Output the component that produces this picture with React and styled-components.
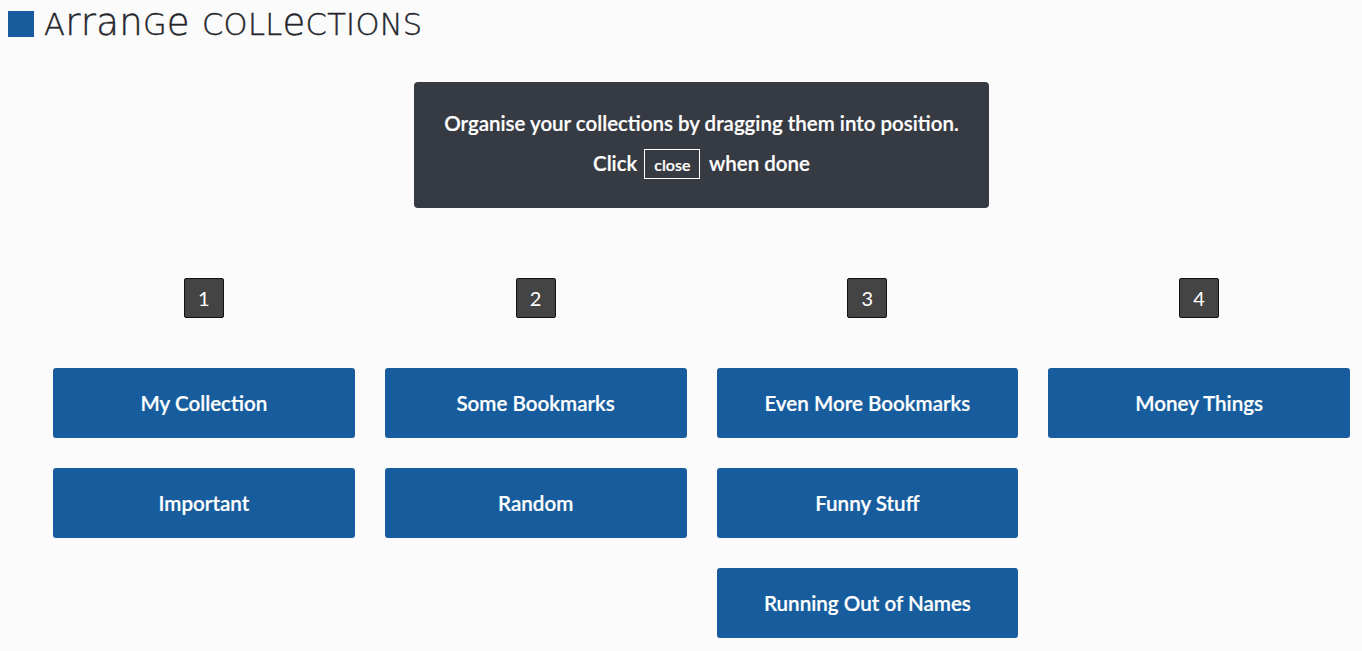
import styled, { createGlobalStyle } from "styled-components";

const columns = [
  { number: 1, items: ["My Collection", "Important"] },
  { number: 2, items: ["Some Bookmarks", "Random"] },
  { number: 3, items: ["Even More Bookmarks", "Funny Stuff", "Running Out of Names"] },
  { number: 4, items: ["Money Things"] },
];

const App = () => {
  return (
    <>
      <GlobalStyle />
      <Page>
        <Header>
          <Square />
          <Title>
            <Unicase>A</Unicase>rran<Unicase>g</Unicase>e{" "}
            <Unicase>Coll</Unicase>e<Unicase>ctions</Unicase>
          </Title>
        </Header>
        <Notice>
          <NoticeLine>Organise your collections by dragging them into position.</NoticeLine>
          <NoticeLine>
            Click <CloseTag>close</CloseTag> when done
          </NoticeLine>
        </Notice>
        <Columns>
          {columns.map((col) => (
            <Column key={col.number}>
              <NumberBadge>{col.number}</NumberBadge>
              <List>
                {col.items.map((item) => (
                  <Card key={item}>{item}</Card>
                ))}
              </List>
            </Column>
          ))}
        </Columns>
      </Page>
    </>
  );
};

export default App;

// styled components css

const GlobalStyle = createGlobalStyle`
  html, body {
    margin: 0;
    background: #fbfbfb;
    font-family: "Lato", "Noto Sans", sans-serif;
  }
`;

const Page = styled.div`
  padding: 8px 12px 13px 8px;
`;

const Header = styled.header`
  display: flex;
  align-items: center;
  gap: 10px;
  height: 32px;
`;

const Square = styled.span`
  width: 26px;
  height: 26px;
  background: #175d9e;
`;

const Title = styled.h1`
  margin: -1px 0 0;
  font-family: "DejaVu Sans", sans-serif;
  font-size: 37px;
  font-weight: 200;
  color: #24262b;
  line-height: 32px;
  letter-spacing: 0.3px;
  white-space: nowrap;
  -webkit-text-stroke: 0.4px #24262b;
`;

const Unicase = styled.span`
  font-size: 30.5px;
  text-transform: uppercase;
`;

const Notice = styled.div`
  box-sizing: border-box;
  width: 575px;
  height: 126px;
  margin: 42px 0 0 406px;
  padding: 21px 0;
  background: #363a42;
  border-radius: 4px;
  color: #fff;
  text-align: center;
`;

const NoticeLine = styled.p`
  margin: 0;
  height: 40px;
  line-height: 40px;
  font-size: 20.5px;
  font-weight: 600;
  -webkit-text-stroke: 0.2px #fff;
`;

const CloseTag = styled.span`
  display: inline-block;
  box-sizing: border-box;
  width: 56px;
  height: 30px;
  margin: -3px 4px 0 2px;
  border: 1px solid #fff;
  font-size: 16px;
  line-height: 29px;
  vertical-align: middle;
`;

const Columns = styled.div`
  display: grid;
  grid-template-columns: repeat(4, 1fr);
  column-gap: 30px;
  margin: 70px 0 0 45px;
`;

const Column = styled.section`
  display: flex;
  flex-direction: column;
  align-items: center;
  gap: 50px;
`;

const NumberBadge = styled.div`
  box-sizing: border-box;
  width: 40px;
  height: 40px;
  background: #444;
  border: 1px solid #111;
  border-radius: 2px;
  color: #fff;
  font-size: 20px;
  line-height: 38px;
  text-align: center;
`;

const List = styled.div`
  display: flex;
  flex-direction: column;
  gap: 30px;
  width: 100%;
`;

const Card = styled.div`
  height: 70px;
  background: #175d9e;
  border-radius: 3px;
  color: #fff;
  font-size: 20.6px;
  font-weight: 600;
  line-height: 70px;
  text-align: center;
  -webkit-text-stroke: 0.2px #fff;
`;
